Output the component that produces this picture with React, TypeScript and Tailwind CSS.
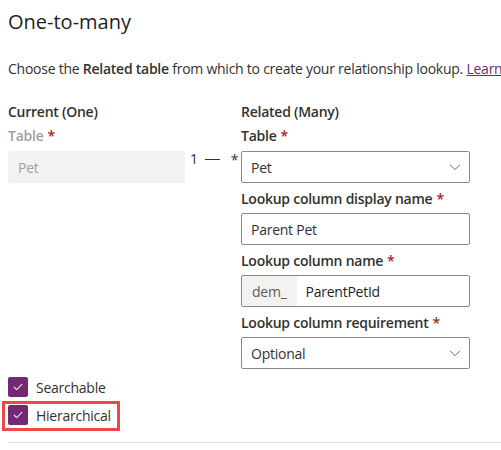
const Req = () => <span className="ml-[4px] text-[#a4262c]">*</span>;

const Label = ({ children, muted = false }: { children: React.ReactNode; muted?: boolean }) => (
  <div className={`h-[30px] flex items-center font-semibold ${muted ? 'text-[#a19f9d]' : 'text-[#323130]'}`}>
    {children}
    <Req />
  </div>
);

const Chevron = () => (
  <svg width="12" height="12" viewBox="0 0 12 12" fill="none">
    <path d="M1 3.8 L6 8.6 L11 3.8" stroke="#605e5c" strokeWidth="0.9" />
  </svg>
);

const Select = ({ value }: { value: string }) => (
  <div className="h-[32px] border border-[#8a8886] rounded-[2px] flex items-center justify-between pl-[9px] pr-[8px]">
    <span>{value}</span>
    <Chevron />
  </div>
);

const Check = ({ label }: { label: string }) => (
  <div className="flex items-center gap-2 h-[20px]">
    <div className="w-[20px] h-[20px] rounded-[2px] bg-[#742774] flex items-center justify-center">
      <svg width="12" height="12" viewBox="0 0 12 12" fill="none">
        <path d="M2.2 6.2 L4.8 8.6 L9.8 3.4" stroke="#e8d9e8" strokeWidth="1.2" strokeLinecap="round" strokeLinejoin="round" />
      </svg>
    </div>
    <span className="text-[#323130]">{label}</span>
  </div>
);

export default function App() {
  return (
    <div className="w-[501px] h-[450px] overflow-hidden bg-white text-[14px] tracking-[-0.25px] text-[#323130] font-['Open_Sans',sans-serif] pl-2">
      <h1 className="text-[20px] font-medium tracking-normal leading-[28px] pt-[8px] text-[#201f1e]">One-to-many</h1>

      <p className="mt-[23px] leading-[20px] whitespace-nowrap">
        Choose the <b className="font-semibold">Related table</b> from which to create your relationship lookup.{' '}
        <span className="text-[#742774] underline">Learn more</span>
      </p>

      <div className="mt-[23px] grid grid-cols-[177px_56px_229px]">
        <div>
          <div className="h-[20px] leading-[20px] font-semibold">Current (One)</div>
          <div className="-mt-[2px]"><Label muted>Table</Label></div>
          <div className="h-[32px] mt-[1px] bg-[#f3f2f1] rounded-[2px] flex items-center px-[10px] text-[#a19f9d]">Pet</div>
        </div>

        <div className="pt-[46px] pl-[5px] flex items-start gap-[7px] text-[#323130]">
          <span>1</span>
          <span className="w-[15px] h-px bg-[#323130] mt-[11px]" />
          <span className="ml-[4px] mt-[1px]">*</span>
        </div>

        <div>
          <div className="h-[20px] leading-[20px] font-semibold">Related (Many)</div>
          <div className="-mt-[2px]"><Label>Table</Label></div>
          <div className="mt-[1px]"><Select value="Pet" /></div>

          <Label>Lookup column display name</Label>
          <div className="h-[32px] border border-[#8a8886] rounded-[2px] flex items-center pl-[9px]">Parent Pet</div>

          <Label>Lookup column name</Label>
          <div className="h-[32px] border border-[#8a8886] rounded-[2px] flex overflow-hidden">
            <div className="bg-[#f3f2f1] flex items-center px-[10px] text-[#605e5c]">dem_</div>
            <div className="flex items-center pl-[9px] text-[#201f1e]">ParentPetId</div>
          </div>

          <Label>Lookup column requirement</Label>
          <Select value="Optional" />
        </div>
      </div>

      <div className="mt-[8px] flex flex-col gap-[8px]">
        <Check label="Searchable" />
        <div className="relative">
          <Check label="Hierarchical" />
          <div className="absolute left-[-6px] top-[-4px] w-[118px] h-[30px] border-[3px] border-[#f04848] pointer-events-none" />
        </div>
      </div>

      <div className="mt-[17px] h-px bg-[#e1dfdd]" />
    </div>
  );
}
